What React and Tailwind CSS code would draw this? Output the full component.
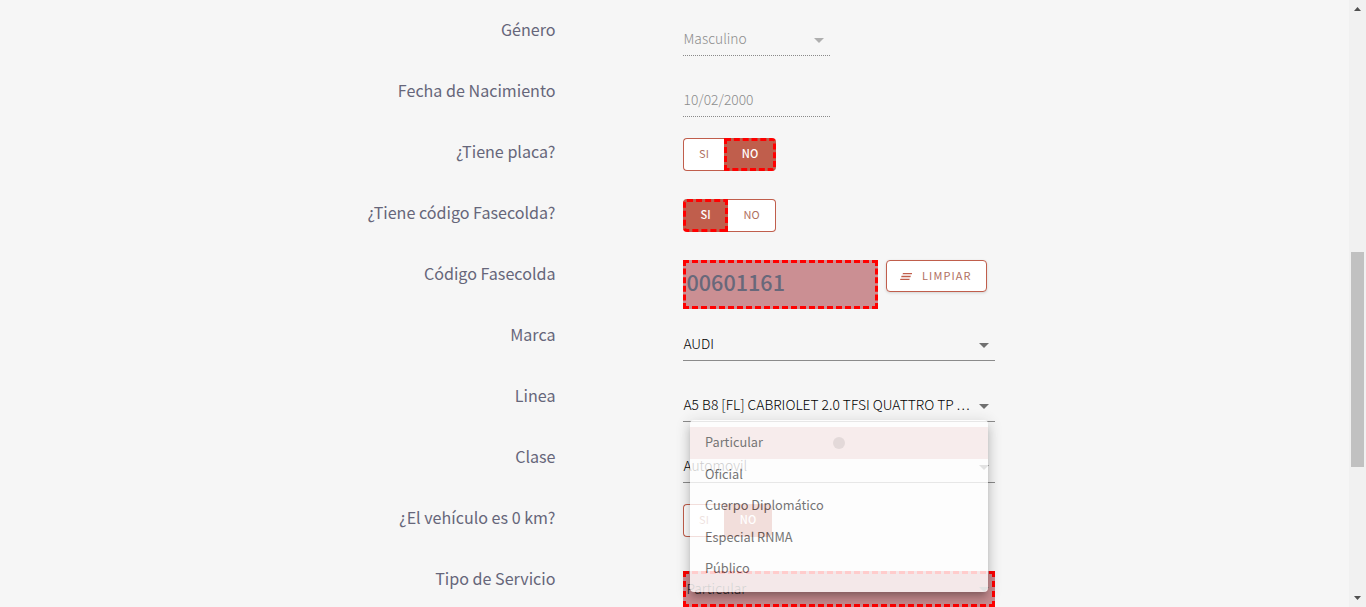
import React from "react";

const Caret = ({ className }) => (
  <svg viewBox="0 0 10 5" className={`h-[5px] w-[10px] shrink-0 ${className}`} fill="currentColor">
    <path d="M0 0h10L5 5z" />
  </svg>
);

const Row = ({ label, children }) => (
  <div className="flex h-[61px] shrink-0">
    <div className="w-[555.5px] pt-[16px] text-right text-[16.1px] leading-[26px] text-[#66667a]">{label}</div>
    <div className="ml-[127.5px] flex items-start">{children}</div>
  </div>
);

const Select = ({ value, cut }) => (
  <div className="flex h-[56px] w-[312px] items-end justify-between border-b border-[#8b8b8b] pr-[6px] pb-[7px] text-[13.8px] leading-[20px] font-light text-black">
    <span className="pl-[0.5px] whitespace-nowrap">
      {value}
      {cut && <span className="ml-[3px] tracking-[1.3px]">...</span>}
    </span>
    <Caret className="mb-[5px] text-[#707070]" />
  </div>
);

const Disabled = ({ value, caret }) => (
  <div className="flex h-[56px] w-[147px] items-end justify-between border-b border-dotted border-[#8a8a8a] pr-[6px] pb-[7px] pl-[0.5px] text-[13.8px] leading-[20px] font-light text-[#8c8c8c]">
    <span>{value}</span>
    {caret && <Caret className="mb-[5px] text-[#afafaf]" />}
  </div>
);

const base = "flex h-[33px] items-center justify-center border pb-[3px] text-[11px] leading-[16px] ";

const Toggle = ({ first, second }) => (
  <div className="mt-[16px] flex">
    <div className={base + "rounded-l-[4px] " + first}>SI</div>
    <div className={base + "rounded-r-[4px] " + second}>NO</div>
  </div>
);

const plain = "border-[#c05e4c] bg-white text-[#b0705f] ";
const active = "border-[#c05e4c] bg-[#c05e4c] font-medium text-white ";
const marked = "border-[3px] border-dashed border-[#ff0000] bg-[#c05e4c] font-medium text-white ";

const Menu = () => (
  <div className="absolute top-[420px] left-[690px] h-[172px] w-[298px] rounded-[4px] bg-white pt-[7px] text-[12.75px] leading-[30px] text-[#555555] opacity-80 shadow-[0_5px_5px_-3px_rgba(0,0,0,0.25),0_8px_10px_1px_rgba(0,0,0,0.16),0_3px_14px_2px_rgba(0,0,0,0.14)]">
    <div className="relative h-[31.5px] bg-[#f8eaea] pl-[15px]">
      Particular
      <span className="absolute top-[10px] left-[143px] h-3 w-3 rounded-full bg-[#dfd3d3]" />
    </div>
    {["Oficial", "Cuerpo Diplomático", "Especial RNMA", "Público"].map((item) => (
      <div key={item} className="h-[31.5px] pl-[15px]">{item}</div>
    ))}
  </div>
);

export default function App() {
  return (
    <div className="relative flex h-[607px] w-[1366px] overflow-hidden bg-[#f6f6f6] font-['Noto_Sans_CJK_SC',sans-serif]">
      <main className="flex w-[1349px] flex-col">
        <Row label="Género"><Disabled value="Masculino" caret /></Row>
        <Row label="Fecha de Nacimiento"><Disabled value="10/02/2000" /></Row>
        <Row label="¿Tiene placa?">
          <Toggle first={plain + "w-[41px] border-r-0"} second={marked + "w-[52px]"} />
        </Row>
        <Row label="¿Tiene código Fasecolda?">
          <Toggle first={marked + "w-[45px]"} second={plain + "w-[48px] border-l-0"} />
        </Row>
        <Row label="Código Fasecolda">
          <div className="mt-[16px] flex h-[49px] w-[195px] items-center border-[3px] border-dashed border-[#ff0000] bg-[#cb8f93] pb-[5px] pl-[0.5px] text-[21.6px] leading-[30px] font-medium text-[#68687a]">00601161</div>
          <div className="mt-[16px] ml-2 flex h-[32px] w-[101px] items-center rounded-[4px] border border-[#c05e4c] bg-white pl-[13px] text-[11px] tracking-[1.1px] text-[#b0705f] shadow-[0_1px_3px_rgba(0,0,0,0.14)]">
            <svg viewBox="0 0 12 7" className="mr-[10px] h-[7px] w-[12px]" fill="#c05e4c">
              <path d="M3 0h9.3l-.5 1.3H2.5zM1.6 2.8h9.3l-.5 1.4H1.1zM.5 5.7h9.3L9.3 7H0z" />
            </svg>
            <span className="pb-[2px] leading-[16px]">LIMPIAR</span>
          </div>
        </Row>
        <Row label="Marca"><Select value="AUDI" /></Row>
        <Row label="Linea"><Select value="A5 B8 [FL] CABRIOLET 2.0 TFSI QUATTRO TP" cut /></Row>
        <Row label="Clase"><Select value="Automovil" /></Row>
        <Row label="¿El vehículo es 0 km?">
          <Toggle first={plain + "w-[41px] border-r-0"} second={active + "w-[48px]"} />
        </Row>
        <Row label="Tipo de Servicio">
          <div className="mt-[22px] flex h-[36px] w-[312px] items-center justify-between border-[3px] border-dashed border-[#ff0000] bg-[#cb8f93] pr-[3px] pb-[3px] pl-[0.5px] text-[13.8px] leading-[20px] font-light text-[#212121]">
            Particular
            <Caret className="mt-[4px] text-[#707070]" />
          </div>
        </Row>
      </main>
      <aside className="flex w-[17px] flex-col items-center justify-between bg-[#f1f1f1] py-[7px] text-[#505050]">
        <svg viewBox="0 0 7 4" className="h-[4px] w-[7px]" fill="currentColor"><path d="M3.5 0L7 4H0z" /></svg>
        <div className="mt-[241px] mb-auto h-[215px] w-[13px] bg-[#c1c1c1]" />
        <svg viewBox="0 0 7 4" className="h-[4px] w-[7px]" fill="currentColor"><path d="M0 0h7L3.5 4z" /></svg>
      </aside>
      <Menu />
    </div>
  );
}
